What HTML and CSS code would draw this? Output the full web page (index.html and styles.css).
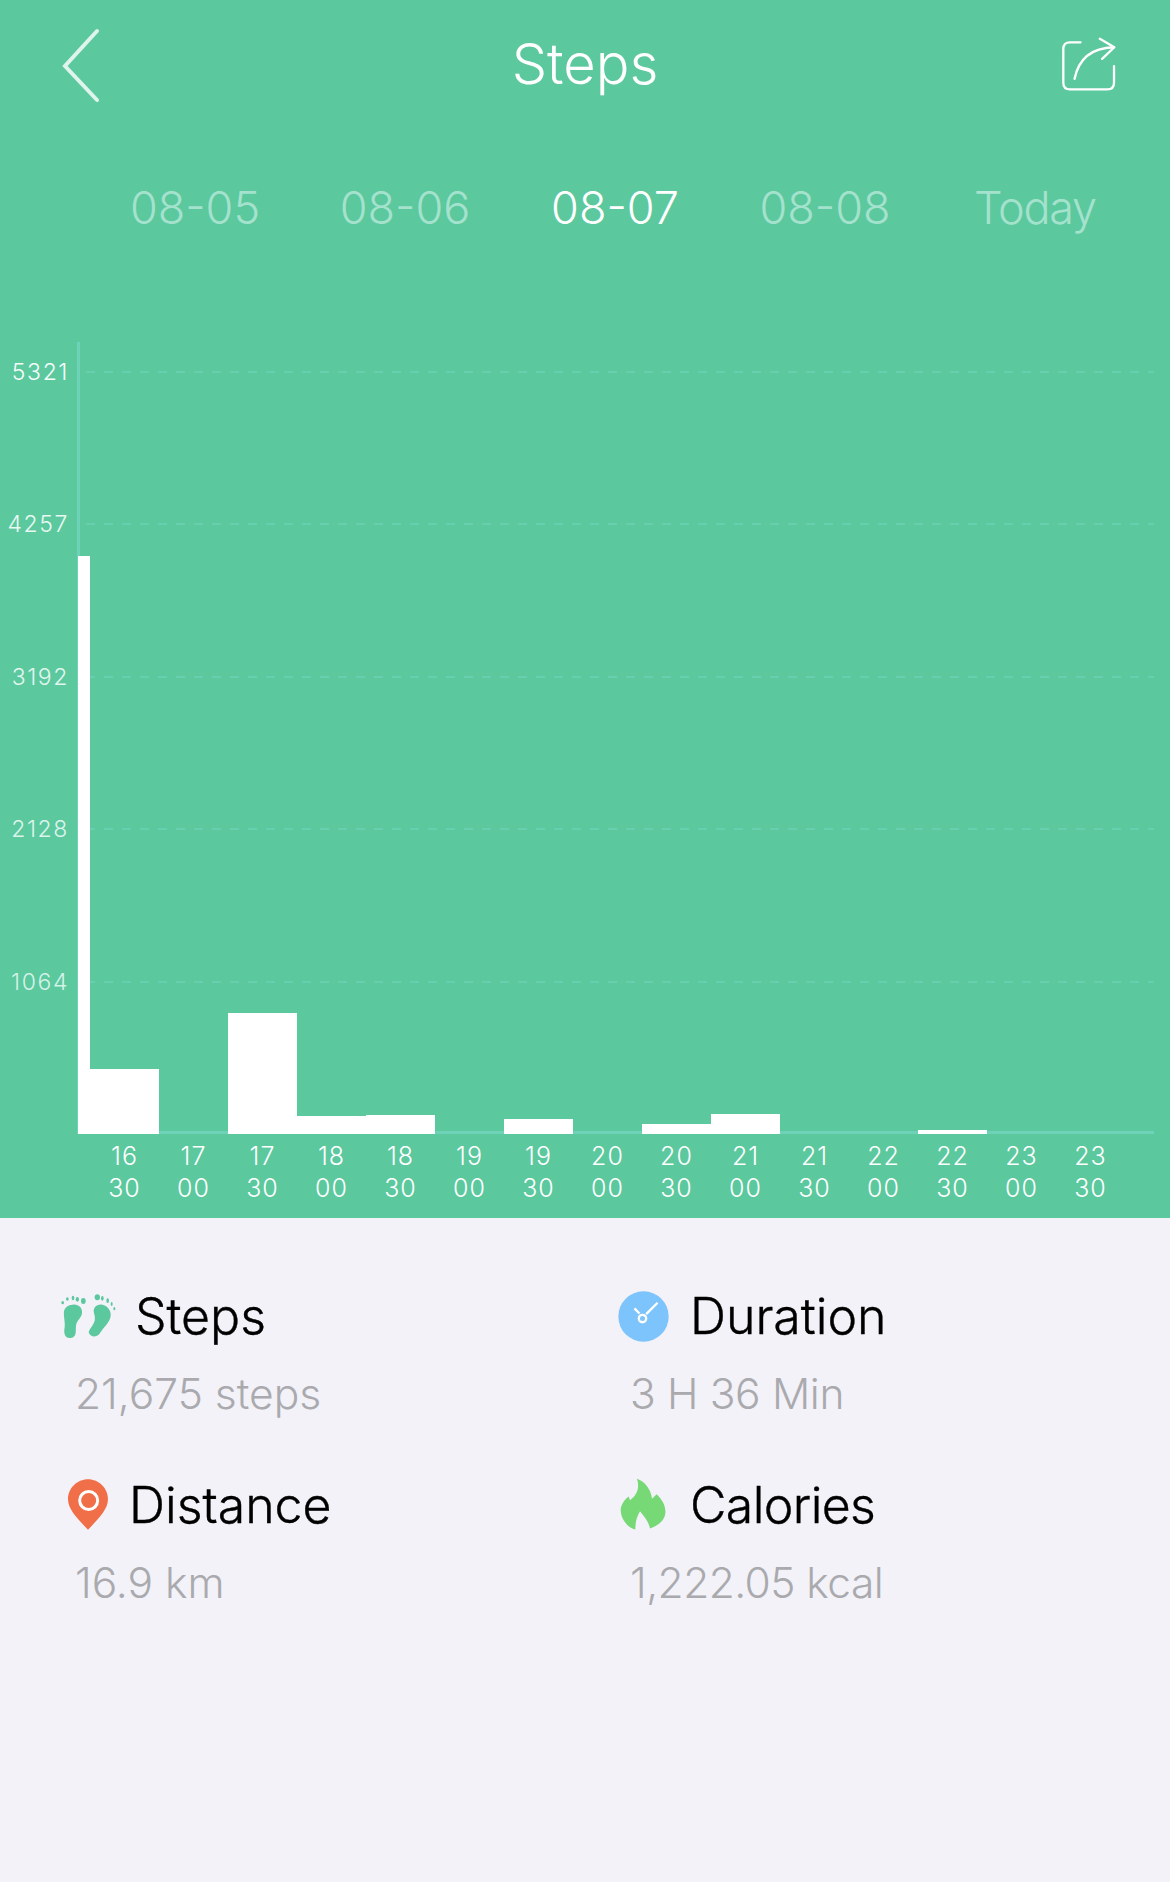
FILE: index.html
```html
<!DOCTYPE html>
<html lang="en">
<head>
<meta charset="utf-8">
<title>Steps</title>
<link rel="stylesheet" href="styles.css">
</head>
<body>
<section class="hero">
  <header class="topbar">
    <svg class="back" viewBox="0 0 40 80"><path d="M37 7 L5 42 L37 76" /></svg>
    <h1 class="title">Steps</h1>
    <svg class="share" viewBox="60 50 175 170"><path d="M122 68 H90 Q70 68 70 88 V190 Q70 210 90 210 H203 Q223 210 223 190 V140" /><path d="M104 178 C115 125 150 85 222 83" /><path d="M180 57 L224 83 L187 118" /></svg>
  </header>
  <nav class="dates">
    <span class="date">08-05</span>
    <span class="date">08-06</span>
    <span class="date active">08-07</span>
    <span class="date">08-08</span>
    <span class="date today">Today</span>
  </nav>
  <div class="chart">
    <div class="yaxis">
      <span class="ylabel y1">5321</span>
      <span class="ylabel y2">4257</span>
      <span class="ylabel y3">3192</span>
      <span class="ylabel y4">2128</span>
      <span class="ylabel y5">1064</span>
    </div>
    <div class="plot">
      <div class="gridlines"><i></i><i></i><i></i><i></i><i></i></div>
      <div class="bars">
        <div class="bar narrow" style="height:578px"></div>
        <div class="bar" style="height:65px"></div>
        <div class="bar" style="height:0"></div>
        <div class="bar" style="height:121px"></div>
        <div class="bar" style="height:18px"></div>
        <div class="bar" style="height:19px"></div>
        <div class="bar" style="height:0"></div>
        <div class="bar" style="height:15px"></div>
        <div class="bar" style="height:0"></div>
        <div class="bar" style="height:10px"></div>
        <div class="bar" style="height:20px"></div>
        <div class="bar" style="height:0"></div>
        <div class="bar" style="height:0"></div>
        <div class="bar" style="height:4px"></div>
      </div>
    </div>
  </div>
  <div class="xaxis">
    <span>16<br>30</span><span>17<br>00</span><span>17<br>30</span><span>18<br>00</span><span>18<br>30</span>
    <span>19<br>00</span><span>19<br>30</span><span>20<br>00</span><span>20<br>30</span><span>21<br>00</span>
    <span>21<br>30</span><span>22<br>00</span><span>22<br>30</span><span>23<br>00</span><span>23<br>30</span>
  </div>
</section>
<section class="stats">
  <div class="stat">
    <div class="stat-head steps">
      <svg class="icon feet" viewBox="60 70 174 135">
        <path d="M98 102 C116 100 128 112 126 128 C124 142 110 150 108 165 C106 180 112 198 92 202 C76 204 70 190 74 170 C76 155 70 135 72 122 C74 110 84 103 98 102Z"/>
        <path d="M178 102 C198 100 214 118 212 135 C210 155 190 170 178 190 C170 200 152 200 147 188 C143 178 158 170 164 150 C168 135 158 125 162 115 C165 106 170 103 178 102Z"/>
        <ellipse cx="68" cy="96" rx="4" ry="5"/><ellipse cx="82" cy="85" rx="4" ry="5"/><ellipse cx="99" cy="82" rx="4" ry="7"/><ellipse cx="112" cy="86" rx="5" ry="7"/><ellipse cx="130" cy="91" rx="7" ry="9"/>
        <ellipse cx="172" cy="80" rx="8" ry="9"/><ellipse cx="187" cy="83" rx="4" ry="7"/><ellipse cx="203" cy="90" rx="4" ry="7"/><ellipse cx="215" cy="100" rx="3" ry="6"/><ellipse cx="223" cy="114" rx="3" ry="5"/>
      </svg>
      <span class="stat-label">Steps</span>
    </div>
    <div class="stat-value first">21,675 steps</div>
  </div>
  <div class="stat">
    <div class="stat-head duration">
      <svg class="icon clock" viewBox="54 61 152 152">
        <circle cx="130" cy="137" r="75" class="clock-face"/>
        <circle cx="127" cy="143" r="11" class="clock-hand"/>
        <path d="M118 128 L103 113 M138 130 L172 96" class="clock-hand"/>
      </svg>
      <span class="stat-label">Duration</span>
    </div>
    <div class="stat-value second tight-a">3 H 36 Min</div>
  </div>
  <div class="stat">
    <div class="stat-head distance">
      <svg class="icon pin" viewBox="53 38 120 152">
        <path d="M113 38 C146 38 173 65 173 98 C173 130 140 160 113 190 C86 160 53 130 53 98 C53 65 80 38 113 38Z" class="pin-body"/>
        <circle cx="115" cy="102" r="27" class="pin-ring"/>
      </svg>
      <span class="stat-label">Distance</span>
    </div>
    <div class="stat-value first">16.9 km</div>
  </div>
  <div class="stat">
    <div class="stat-head calories">
      <svg class="icon flame" viewBox="62 40 138 155">
        <path d="M113 42 C135 50 155 72 158 102 L172 88 C190 105 200 125 198 145 C196 165 178 182 152 191 C148 170 135 155 122 139 C112 155 108 172 108 194 C85 188 65 165 64 135 C65 120 75 105 88 95 L92 106 C112 92 122 70 113 42Z" class="flame-body"/>
      </svg>
      <span class="stat-label tight-b">Calories</span>
    </div>
    <div class="stat-value second tight-c">1,222.05 kcal</div>
  </div>
</section>
</body>
</html>
```

FILE: styles.css
```css
* { box-sizing: border-box; }
html, body { margin: 0; padding: 0; }
body {
  width: 1170px;
  height: 1882px;
  background: #f2f2f8;
  font-family: Inter, "Liberation Sans", sans-serif;
  overflow: hidden;
}
.hero {
  height: 1218px;
  background: #5bc89e;
  color: #fff;
  overflow: hidden;
}
.topbar {
  height: 128px;
  padding: 0 52px;
  display: grid;
  grid-template-columns: 1fr auto 1fr;
  align-items: center;
}
.back { width: 40px; height: 80px; margin-left: 8px; fill: none; stroke: #fff; stroke-opacity: .8; stroke-width: 4; stroke-linecap: round; }
.share { width: 58px; height: 57px; justify-self: end; fill: none; stroke: #fff; stroke-width: 7; stroke-linecap: round; stroke-linejoin: round; }
.title {
  margin: 0;
  font-size: 56px;
  font-weight: 300;
  line-height: 60px;
}
.dates {
  height: 160px;
  padding: 0 30px 0 90px;
  display: grid;
  grid-template-columns: repeat(5, 210px);
  align-items: start;
  text-align: center;
}
.date {
  margin-top: 52px;
  font-size: 45px;
  line-height: 56px;
  font-weight: 300;
  color: #a4e2cd;
}
.date.active { color: #fff; }
.date.today { letter-spacing: -1.2px; }
.chart {
  height: 792px;
  margin-top: 54px;
  display: flex;
}
.yaxis {
  width: 78px;
  padding: 15px 9px 0 0;
  display: flex;
  flex-direction: column;
  align-items: flex-end;
}
.ylabel {
  height: 152.4px;
  font-size: 23px;
  line-height: 30px;
  font-weight: 300;
  letter-spacing: 1.6px;
}
.y1 { color: #f6fcfa; }
.y2 { color: #e9f8f3; }
.y3 { color: #e2f6ef; }
.y4 { color: #dcf4ec; }
.y5 { color: #d5f2e8; }
.plot {
  position: relative;
  width: 1077px;
  border-left: 3px solid #6dd2b8;
  border-bottom: 3px solid #6dd2b8;
  margin-left: -1px;
}
.gridlines {
  position: absolute;
  left: 0;
  right: 0;
  top: 29px;
}
.gridlines i {
  display: block;
  height: 152.4px;
  background: repeating-linear-gradient(90deg, transparent 0 6px, #67ceb0 6px 15px, transparent 15px 18px) top left / 100% 2px no-repeat;
}
.bars {
  position: absolute;
  left: -2px;
  bottom: -3px;
  display: flex;
  align-items: flex-end;
}
.bar { width: 69px; background: #fff; flex: none; }
.bar.narrow { width: 12px; }
.xaxis {
  padding: 6px 0 0 90px;
  display: flex;
}
.xaxis span {
  width: 69px;
  flex: none;
  text-align: center;
  font-size: 25px;
  line-height: 32px;
  font-weight: 300;
  letter-spacing: 1px;
}
.stats {
  padding: 66px 0 0 60px;
  display: grid;
  grid-template-columns: 558px 1fr;
  grid-auto-rows: 189px;
}
.stat-head {
  height: 64px;
  display: flex;
  align-items: center;
}
.stat-label {
  font-size: 50px;
  font-weight: 300;
  line-height: 64px;
  color: #000;
  -webkit-text-stroke: .4px #000;
}
.stat-value {
  margin-top: 21px;
  font-size: 42.5px;
  line-height: 50px;
  font-weight: 300;
  color: #aaaaae;
}
.stat-value.first { padding-left: 15px; }
.stat-value.second { padding-left: 12px; }
.tight-a { letter-spacing: -.35px; }
.tight-b { letter-spacing: -.6px; }
.tight-c { letter-spacing: -.55px; }
.icon { flex: none; }
.feet { width: 58px; height: 45px; margin-right: 17px; fill: #5bc89e; }
.clock { width: 51px; height: 51px; margin-right: 21px; }
.clock-face { fill: #7cc4fb; }
.clock-hand { fill: none; stroke: #fff; stroke-width: 7; }
.pin { width: 40px; height: 51px; margin: -2px 21px 0 8px; }
.pin-body { fill: #f06f48; }
.pin-ring { fill: none; stroke: #fff; stroke-width: 9; }
.flame { width: 46px; height: 52px; margin: -2px 24px 0 2px; }
.flame-body { fill: #76d975; }
```
